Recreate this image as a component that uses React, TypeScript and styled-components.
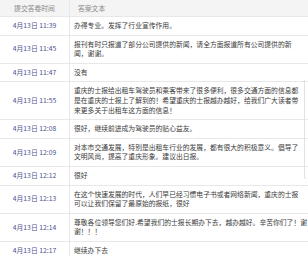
import * as React from "react";
import styled, { createGlobalStyle } from "styled-components";

const GlobalStyle = createGlobalStyle`
  html, body {
    margin: 0;
    padding: 0;
    background: #fff;
  }
  body {
    font-family: "Noto Sans CJK SC", "Noto Sans", sans-serif;
  }
`;

const answers = [
  { time: "4月13日 11:39", text: "办得专业。发挥了行业宣传作用。" },
  {
    time: "4月13日 11:45",
    text: "报刊有时只报道了部分公司提供的新闻，请全方面报道所有公司提供的新\n闻，谢谢。",
  },
  { time: "4月13日 11:47", text: "没有" },
  {
    time: "4月13日 11:55",
    text: "重庆的士报给出租车驾驶员和乘客带来了很多便利，很多交通方面的信息都\n是在重庆的士报上了解到的！希望重庆的士报越办越好，给我们广大读者带\n来更多关于出租车这方面的信息！",
  },
  { time: "4月13日 12:08", text: "很好，继续前进成为驾驶员的贴心益友。" },
  {
    time: "4月13日 12:09",
    text: "对本市交通发展，特别是出租车行业的发展，都有很大的积极意义。倡导了\n文明风尚，提高了重庆形象。建议出日报。",
  },
  { time: "4月13日 12:12", text: "很好" },
  {
    time: "4月13日 12:13",
    text: "在这个快速发展的时代，人们早已经习惯电子书或者网络新闻，重庆的士报\n可以让我们保留了最原始的报纸，很好",
  },
  {
    time: "4月13日 12:14",
    text: "尊敬各位领导您们好.希望我们的士报长期办下去，越办越好。辛苦你们了！谢\n谢！！！",
  },
  { time: "4月13日 12:17", text: "继续办下去" },
];

const Wrap = styled.div`
  position: relative;
  width: 308px;
  height: 256px;
  overflow: hidden;
`;

const Table = styled.div`
  display: flex;
  flex-direction: column;
`;

const Row = styled.div<{ $head?: boolean }>`
  display: grid;
  grid-template-columns: 70px 1fr;
  border-bottom: 1px solid #e8e8e8;
  background: ${(p) => (p.$head ? "#f4f4f4" : "#fff")};
  font-size: 6.8px;
  line-height: ${(p) => (p.$head ? "16px" : "9.6px")};
`;

const TimeCell = styled.div<{ $head?: boolean }>`
  display: flex;
  align-items: center;
  justify-content: center;
  border-right: 1px solid #e8e8e8;
  color: ${(p) => (p.$head ? "#888" : "#4d5290")};
  padding: ${(p) => (p.$head ? "0" : "4px 0")};
  white-space: nowrap;
`;

const TextCell = styled.div<{ $head?: boolean }>`
  padding: ${(p) => (p.$head ? "0 0 0 8px" : "4px 2px 4px 4px")};
  color: ${(p) => (p.$head ? "#888" : "#3a3a3a")};
  white-space: pre;
`;

const Thumb = styled.div`
  position: absolute;
  right: 1px;
  top: 80px;
  width: 2px;
  height: 98px;
  border-left: 1px solid #e2e2e2;
  border-bottom: 1px solid #ececec;
  border-radius: 0 0 2px 2px;
`;

export default function App() {
  return (
    <>
      <GlobalStyle />
      <Wrap>
        <Table>
          <Row $head>
            <TimeCell $head>提交答卷时间</TimeCell>
            <TextCell $head>答案文本</TextCell>
          </Row>
          {answers.map((a) => (
            <Row key={a.time}>
              <TimeCell>{a.time}</TimeCell>
              <TextCell>{a.text}</TextCell>
            </Row>
          ))}
        </Table>
        <Thumb />
      </Wrap>
    </>
  );
}
